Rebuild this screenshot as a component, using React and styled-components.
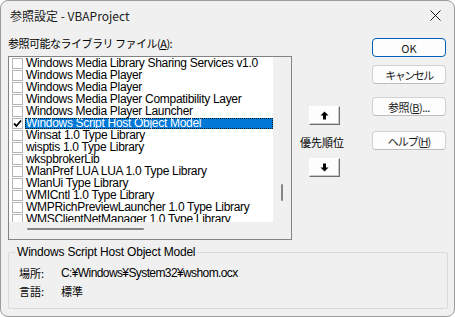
import React from "react";
import styled, { createGlobalStyle } from "styled-components";

const GlobalStyle = createGlobalStyle`
  html, body {
    margin: 0;
    padding: 0;
    background: #ffffff;
  }
  * {
    box-sizing: border-box;
  }
`;

const Window = styled.div`
  width: 455px;
  height: 317px;
  border: 1px solid #9c9c9c;
  border-radius: 8px;
  background: #f0f0f0;
  overflow: hidden;
  font-family: "Liberation Sans", "Noto Sans CJK JP", sans-serif;
  color: #000;
`;

const TitleBar = styled.div`
  height: 29px;
  display: flex;
  align-items: center;
  justify-content: space-between;
  padding: 0 9px 0 9px;
  font-family: "Noto Sans CJK JP", sans-serif;
  font-size: 12px;
  color: #1a1a1a;
`;

const CloseButton = styled.div`
  width: 14px;
  height: 14px;
  display: flex;
  align-items: center;
  justify-content: center;
  margin-right: 3px;
`;

const Main = styled.div`
  display: flex;
  padding: 6px 0 0 7px;
`;

const LeftColumn = styled.div`
  width: 284px;
  display: flex;
  flex-direction: column;
`;

const JpLabel = styled.div`
  font-family: "Noto Sans CJK JP", sans-serif;
  font-size: ${(p) => p.$size || 11}px;
  letter-spacing: ${(p) => p.$spacing || 0}px;
  line-height: 14px;
  white-space: nowrap;
  u {
    text-decoration: underline;
    text-underline-offset: 1px;
  }
`;

const ListBox = styled.div`
  margin-top: 6px;
  height: 184px;
  border: 1px solid #838383;
  display: grid;
  grid-template-columns: 1fr 18px;
  grid-template-rows: 1fr 17px;
  background: #f0f0f0;
`;

const Items = styled.div`
  background: #ffffff;
  overflow: hidden;
  padding-left: 3px;
`;

const Row = styled.div`
  height: 12px;
  display: flex;
  align-items: center;
  gap: 2px;
`;

const CheckBox = styled.div`
  width: 11px;
  height: 11px;
  border: 1px solid #b4b4b4;
  background: #fff;
  flex: none;
  display: flex;
  align-items: center;
  justify-content: center;
`;

const ItemText = styled.div`
  flex: 1;
  height: 11px;
  display: flex;
  align-items: center;
  padding-left: 1px;
  font-size: 12px;
  line-height: 11px;
  letter-spacing: -0.3px;
  white-space: nowrap;
  background: ${(p) => (p.$selected ? "#0078d7" : "transparent")};
  color: ${(p) => (p.$selected ? "#ffffff" : "#000000")};
  outline: ${(p) => (p.$selected ? "1px dotted #1b1b1b" : "none")};
  outline-offset: -1px;
`;

const VTrack = styled.div`
  display: flex;
  justify-content: flex-start;
  padding: 127px 0 0 8px;
`;

const VThumb = styled.div`
  width: 2px;
  height: 17px;
  border-radius: 1px;
  background: #858585;
`;

const HTrack = styled.div`
  padding: 6px 0 0 18px;
`;

const HThumb = styled.div`
  width: 117px;
  height: 2px;
  border-radius: 1px;
  background: #858585;
`;

const MiddleColumn = styled.div`
  width: 80px;
  display: flex;
  flex-direction: column;
  align-items: flex-start;
  padding: 70px 0 0 8px;
`;

const ArrowButton = styled.div`
  width: 31px;
  height: 19px;
  margin-left: 9px;
  margin-top: ${(p) => p.$top || 0}px;
  background: #fdfdfd;
  border: 1px solid;
  border-color: #ffffff #6e6e6e #6e6e6e #ffffff;
  box-shadow: inset -1px -1px 0 #c9c9c9;
  display: flex;
  align-items: center;
  justify-content: center;
`;

const PriorityLabel = styled(JpLabel)`
  margin-top: 10px;
`;

const RightColumn = styled.div`
  width: 74px;
  display: flex;
  flex-direction: column;
  padding-top: 2px;
`;

const Button = styled.div`
  height: 19px;
  margin-top: ${(p) => p.$top || 0}px;
  background: #fdfdfd;
  border: 1px solid ${(p) => (p.$default ? "#005fb8" : "#d1d1d1")};
  border-bottom-color: ${(p) => (p.$default ? "#005fb8" : "#bcbcbc")};
  border-radius: 4px;
  display: flex;
  align-items: center;
  justify-content: center;
  font-family: "Noto Sans CJK JP", sans-serif;
  font-size: 11px;
  letter-spacing: ${(p) => p.$spacing || 0}px;
  color: #1a1a1a;
  u {
    text-underline-offset: 1px;
  }
`;

const Group = styled.fieldset`
  margin: 5px 0 0 7px;
  width: 440px;
  height: 64px;
  padding: 7px 0 0 10px;
  border: 1px solid #dadada;
  border-radius: 2px;
  min-inline-size: 0;
`;

const Legend = styled.legend`
  margin-left: -4px;
  padding: 0 2px;
  font-size: 12px;
  line-height: 14px;
  letter-spacing: -0.2px;
`;

const InfoRow = styled.div`
  display: flex;
  height: 14px;
  align-items: center;
  margin-bottom: 4px;
`;

const InfoKey = styled(JpLabel)`
  width: 42px;
`;

const InfoValue = styled.div`
  font-family: ${(p) => (p.$jp ? '"Noto Sans CJK JP", sans-serif' : '"Liberation Sans", "Noto Sans CJK JP", sans-serif')};
  font-size: ${(p) => (p.$jp ? 11 : 12)}px;
  letter-spacing: ${(p) => (p.$jp ? 0 : -0.6)}px;
  line-height: 14px;
`;

const items = [
  { name: "Windows Media Library Sharing Services v1.0" },
  { name: "Windows Media Player" },
  { name: "Windows Media Player" },
  { name: "Windows Media Player Compatibility Layer" },
  { name: "Windows Media Player Launcher" },
  { name: "Windows Script Host Object Model", checked: true, selected: true },
  { name: "Winsat 1.0 Type Library" },
  { name: "wisptis 1.0 Type Library" },
  { name: "wkspbrokerLib" },
  { name: "WlanPref LUA LUA 1.0 Type Library" },
  { name: "WlanUi Type Library" },
  { name: "WMICntl 1.0 Type Library" },
  { name: "WMPRichPreviewLauncher 1.0 Type Library" },
  { name: "WMSClientNetManager 1.0 Type Library" },
];

const Check = () => (
  <svg width="9" height="9" viewBox="0 0 9 9">
    <path d="M1 4.5 L3.5 7 L8 1.5" fill="none" stroke="#000" strokeWidth="1.8" />
  </svg>
);

const Arrow = ({ down }) => (
  <svg width="9" height="9" viewBox="0 0 9 9" style={down ? { transform: "rotate(180deg)" } : undefined}>
    <path d="M4.5 0.5 L8.5 4.5 L6 4.5 L6 8.5 L3 8.5 L3 4.5 L0.5 4.5 Z" fill="#000" />
  </svg>
);

const App = () => {
  return (
    <>
      <GlobalStyle />
      <Window>
        <TitleBar>
          <span>参照設定 - VBAProject</span>
          <CloseButton>
            <svg width="11" height="11" viewBox="0 0 11 11">
              <path d="M0.5 0.5 L10.5 10.5 M10.5 0.5 L0.5 10.5" stroke="#1a1a1a" strokeWidth="1" />
            </svg>
          </CloseButton>
        </TitleBar>
        <Main>
          <LeftColumn>
            <JpLabel $size={11} $spacing={-0.5}>
              参照可能なライブラリ ファイル(<u>A</u>):
            </JpLabel>
            <ListBox>
              <Items>
                {items.map((item, index) => (
                  <Row key={index}>
                    <CheckBox>{item.checked && <Check />}</CheckBox>
                    <ItemText $selected={item.selected}>{item.name}</ItemText>
                  </Row>
                ))}
              </Items>
              <VTrack>
                <VThumb />
              </VTrack>
              <HTrack>
                <HThumb />
              </HTrack>
              <div />
            </ListBox>
          </LeftColumn>
          <MiddleColumn>
            <ArrowButton>
              <Arrow />
            </ArrowButton>
            <PriorityLabel $size={11}>優先順位</PriorityLabel>
            <ArrowButton $top={9}>
              <Arrow down />
            </ArrowButton>
          </MiddleColumn>
          <RightColumn>
            <Button $default>OK</Button>
            <Button $top={8} $spacing={-1.5}>キャンセル</Button>
            <Button $top={13} $spacing={-0.5}>
              参照(<u>B</u>)...
            </Button>
            <Button $top={15} $spacing={-1}>
              ヘルプ(<u>H</u>)
            </Button>
          </RightColumn>
        </Main>
        <Group>
          <Legend>Windows Script Host Object Model</Legend>
          <InfoRow>
            <InfoKey>場所:</InfoKey>
            <InfoValue>C:¥Windows¥System32¥wshom.ocx</InfoValue>
          </InfoRow>
          <InfoRow>
            <InfoKey>言語:</InfoKey>
            <InfoValue $jp>標準</InfoValue>
          </InfoRow>
        </Group>
      </Window>
    </>
  );
};

export default App;
